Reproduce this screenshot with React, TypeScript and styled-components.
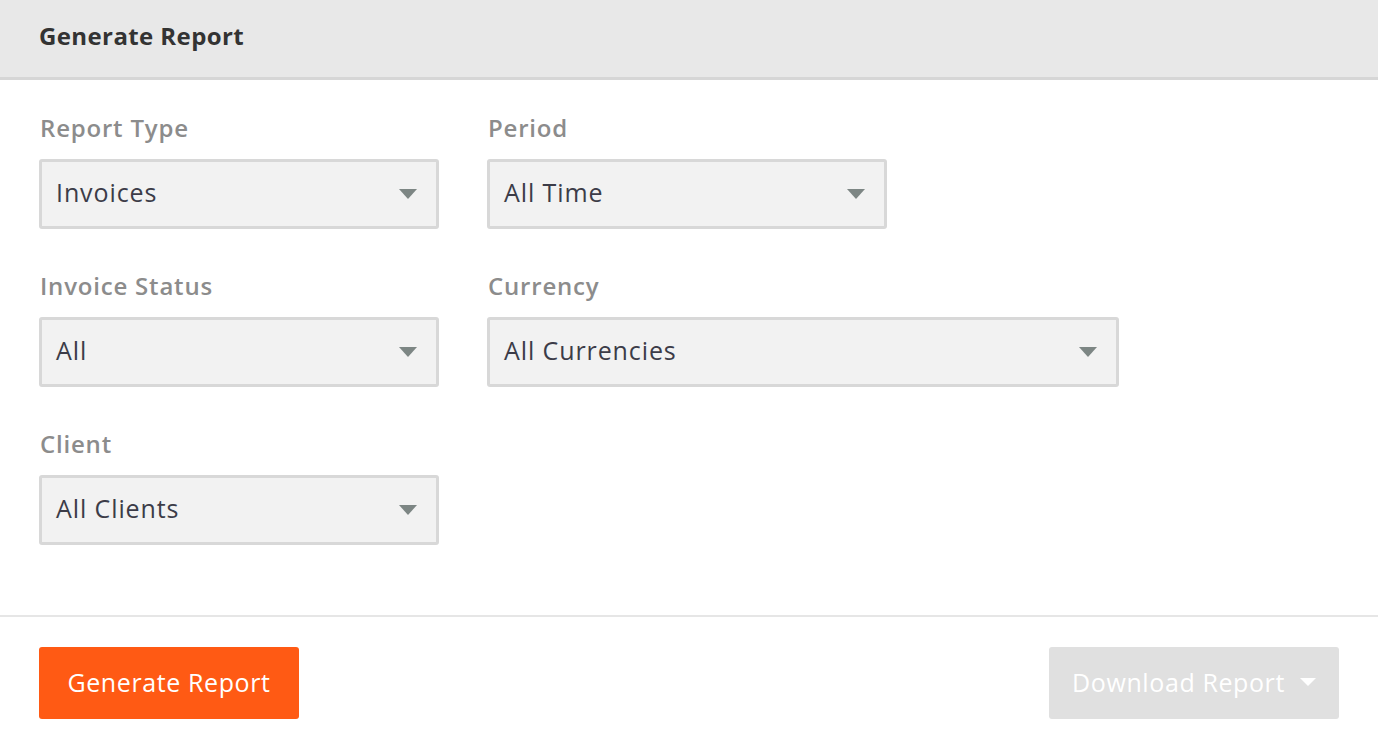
import React from "react";
import styled, { createGlobalStyle } from "styled-components";

const GlobalStyle = createGlobalStyle`
  html, body {
    margin: 0;
    padding: 0;
    background: #ffffff;
    font-family: "Open Sans", Lato, "Liberation Sans", sans-serif;
  }
`;

const Page = styled.div`
  width: 1378px;
  display: flex;
  flex-direction: column;
`;

const Header = styled.header`
  height: 80px;
  box-sizing: border-box;
  background: #e8e8e8;
  border-bottom: 3px solid #d6d6d6;
  display: flex;
  align-items: center;
  padding: 0 40px 6px 39px;

  h1 {
    margin: 0;
    font-size: 24px;
    font-weight: 700;
    color: #333333;
    letter-spacing: 0.4px;
  }
`;

const Form = styled.div`
  padding: 33px 39px 0 39px;
  height: 502px;
  display: flex;
  flex-direction: column;
  gap: 42px;
  border-bottom: 2px solid #e6e6e6;
`;

const Row = styled.div`
  display: flex;
  gap: 48px;
`;

const Field = styled.div`
  display: flex;
  flex-direction: column;
  gap: 16px;
`;

const Label = styled.label`
  font-size: 24px;
  font-weight: 600;
  color: #8c8c8c;
  padding-left: 1px;
  line-height: 30px;
  letter-spacing: 0.8px;
`;

const Select = styled.div<{ $width: number }>`
  width: ${(p) => p.$width}px;
  height: 70px;
  box-sizing: border-box;
  border: 3px solid #d8d8d8;
  border-radius: 3px;
  background: #f2f2f2;
  display: flex;
  align-items: center;
  justify-content: space-between;
  padding: 0 19px 0 14px;
  font-size: 25px;
  color: #3c3c48;
  letter-spacing: 0.9px;

  span {
    margin-bottom: 5px;
  }
`;

const Caret = ({ color, w = 18, h = 10 }: { color: string; w?: number; h?: number }) => (
  <svg width={w} height={h} viewBox={`0 0 ${w} ${h}`}>
    <path d={`M0 0 L${w} 0 L${w / 2} ${h} Z`} fill={color} />
  </svg>
);

const Footer = styled.div`
  display: flex;
  justify-content: space-between;
  align-items: center;
  padding: 30px 39px 0 39px;
`;

const Button = styled.button<{ $primary?: boolean }>`
  height: 72px;
  border: none;
  border-radius: 3px;
  font-family: inherit;
  font-size: 25px;
  letter-spacing: 0.6px;
  color: #ffffff;
  display: flex;
  align-items: center;
  gap: 15px;
  padding: 0 0 2px 0;
  background: ${(p) => (p.$primary ? "#ff5a14" : "#e0e0e0")};
  width: ${(p) => (p.$primary ? "260px" : "290px")};
  justify-content: center;
`;

const fields = [
  [
    { label: "Report Type", value: "Invoices", width: 400 },
    { label: "Period", value: "All Time", width: 400 },
  ],
  [
    { label: "Invoice Status", value: "All", width: 400 },
    { label: "Currency", value: "All Currencies", width: 632 },
  ],
  [{ label: "Client", value: "All Clients", width: 400 }],
];

export default function App() {
  return (
    <Page>
      <GlobalStyle />
      <Header>
        <h1>Generate Report</h1>
      </Header>
      <Form>
        {fields.map((row, i) => (
          <Row key={i}>
            {row.map((f) => (
              <Field key={f.label}>
                <Label>{f.label}</Label>
                <Select $width={f.width}>
                  <span>{f.value}</span>
                  <Caret color="#7d8684" />
                </Select>
              </Field>
            ))}
          </Row>
        ))}
      </Form>
      <Footer>
        <Button $primary>Generate Report</Button>
        <Button>
          Download Report
          <Caret color="#ffffff" w={16} h={8} />
        </Button>
      </Footer>
    </Page>
  );
}
